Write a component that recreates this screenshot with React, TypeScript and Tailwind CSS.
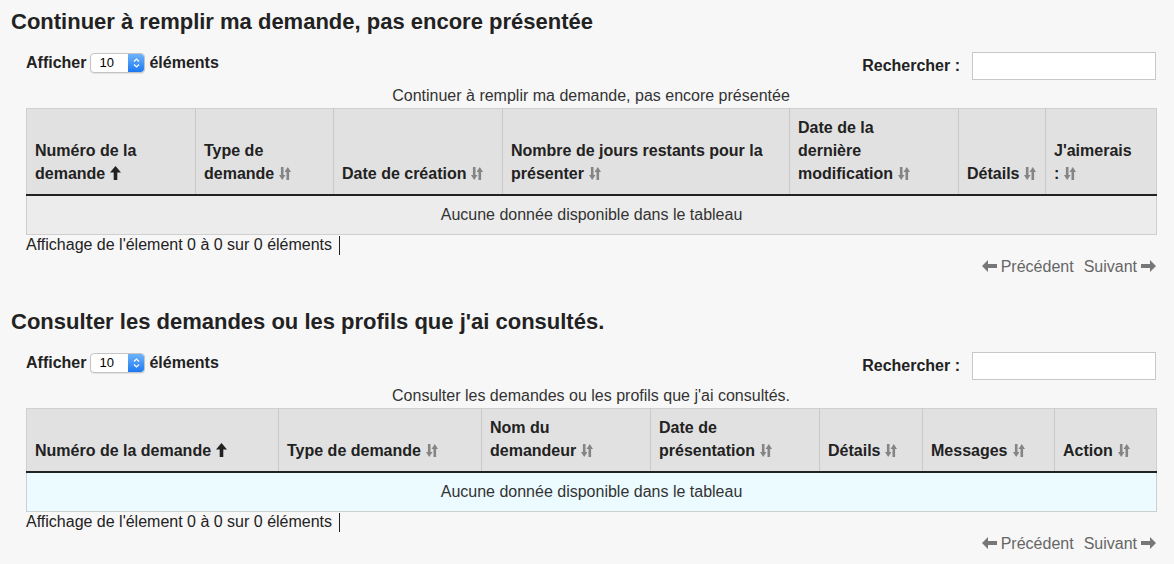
import React from "react";

const SortIcon = () => (
  <svg width="12" height="15" viewBox="0 0 12 15" className="inline-block ml-[5px] -mt-[3px] align-middle">
    <path d="M1.9 1h2.6v8h2L3.2 14 0 9h1.9z" fill="#858585" />
    <path d="M7.5 14h2.6V6H12L8.8 1 5.5 6h2z" fill="#858585" />
  </svg>
);

const UpIcon = () => (
  <svg width="11" height="14" viewBox="0 0 11 14" className="inline-block ml-[5px] -mt-[4px] align-middle">
    <path d="M5.5 0 11 6.5H7.3V14H3.7V6.5H0z" fill="#222" />
  </svg>
);

const ArrowLeft = () => (
  <svg width="15" height="12" viewBox="0 0 15 12" className="inline-block mr-[4px] -mt-[3px] align-middle">
    <path d="M0 6 6 0v4h9v4H6v4z" fill="#777" />
  </svg>
);

const ArrowRight = () => (
  <svg width="15" height="12" viewBox="0 0 15 12" className="inline-block ml-[4px] -mt-[3px] align-middle">
    <path d="M15 6 9 0v4H0v4h9v4z" fill="#777" />
  </svg>
);

const FakeSelect = () => (
  <div className="mx-[4px] flex h-[20px] w-[55px] items-stretch overflow-hidden rounded-[4px] border border-[#c4c4c4] bg-white shadow-[0_1px_1px_rgba(0,0,0,0.08)]">
    <span className="flex-1 pl-[8px] text-[13px] font-normal leading-[18px] text-black">10</span>
    <span className="flex w-[16px] items-center justify-center rounded-r-[3px] bg-gradient-to-b from-[#6cb3fa] to-[#1a78f2]">
      <svg width="7" height="12" viewBox="0 0 7 12">
        <path d="M1 4.5 3.5 2 6 4.5M1 7.5 3.5 10 6 7.5" stroke="white" strokeWidth="1.2" fill="none" />
      </svg>
    </span>
  </div>
);

type Col = { lines: string[]; w: string; up?: boolean };

const DataSection = ({ title, cols, emptyBg }: { title: string; cols: Col[]; emptyBg: string }) => (
  <section className="pl-[11px] pr-[18px]">
    <h2 className="text-[22px] font-bold leading-[24px] text-[#222]">{title}</h2>
    <div className="pl-[15px]">
      <div className="mt-[18px] flex items-start justify-between">
        <div className="flex h-[22px] items-center text-[16px] font-bold text-[#222]">
          Afficher
          <FakeSelect />
          éléments
        </div>
        <div className="flex items-center text-[16px] font-bold text-[#222]">
          Rechercher :
          <input className="ml-[12px] h-[28px] w-[184px] border border-[#c8c8c8] bg-white outline-none" />
        </div>
      </div>
      <div className="mt-[6px] mb-[2px] text-center text-[16px] leading-[20px] text-[#333]">{title}</div>
      <table className="w-full table-fixed border-collapse border border-[#cfcfcf] text-[16px] text-[#333]">
        <thead>
          <tr className="bg-[#e1e1e1]">
            {cols.map((c, i) => (
              <th
                key={i}
                className={`${c.w} whitespace-nowrap border-b-2 border-b-[#222] border-l border-l-[#c9c9c9] px-[8px] pt-[7px] pb-[9px] text-left align-bottom font-bold leading-[23px] text-[#222] first:border-l-0`}
              >
                {c.lines.map((l, j) => (
                  <React.Fragment key={j}>
                    {j > 0 && <br />}
                    {l}
                  </React.Fragment>
                ))}
                {c.up ? <UpIcon /> : <SortIcon />}
              </th>
            ))}
          </tr>
        </thead>
        <tbody>
          <tr className={emptyBg}>
            <td colSpan={cols.length} className="py-[8px] text-center leading-[22px]">
              Aucune donnée disponible dans le tableau
            </td>
          </tr>
        </tbody>
      </table>
      <div className="flex items-center text-[16px] leading-[20px] text-[#222]">
        Affichage de l'élement 0 à 0 sur 0 éléments
        <span className="ml-[7px] inline-block h-[19px] w-px bg-[#222]" />
      </div>
      <div className="mt-[2px] flex justify-end gap-[10px] text-[16px] leading-[20px] text-[#666]">
        <span>
          <ArrowLeft />
          Précédent
        </span>
        <span>
          Suivant
          <ArrowRight />
        </span>
      </div>
    </div>
  </section>
);

const first: Col[] = [
  { lines: ["Numéro de la", "demande"], w: "w-[169px]", up: true },
  { lines: ["Type de", "demande"], w: "w-[138px]" },
  { lines: ["Date de création"], w: "w-[169px]" },
  { lines: ["Nombre de jours restants pour la", "présenter"], w: "w-[287px]" },
  { lines: ["Date de la", "dernière", "modification"], w: "w-[169px]" },
  { lines: ["Détails"], w: "w-[87px]" },
  { lines: ["J'aimerais", ":"], w: "w-[111px]" },
];

const second: Col[] = [
  { lines: ["Numéro de la demande"], w: "w-[252px]", up: true },
  { lines: ["Type de demande"], w: "w-[203px]" },
  { lines: ["Nom du", "demandeur"], w: "w-[169px]" },
  { lines: ["Date de", "présentation"], w: "w-[169px]" },
  { lines: ["Détails"], w: "w-[103px]" },
  { lines: ["Messages"], w: "w-[132px]" },
  { lines: ["Action"], w: "w-[102px]" },
];

export default function App() {
  return (
    <div className="min-h-[564px] w-full bg-[#f7f7f7] pt-[10px] font-['Liberation_Sans',Arial,sans-serif]">
      <DataSection title="Continuer à remplir ma demande, pas encore présentée" cols={first} emptyBg="bg-[#ececec]" />
      <div className="h-[33px]" />
      <DataSection title="Consulter les demandes ou les profils que j'ai consultés." cols={second} emptyBg="bg-[#ebfbff]" />
    </div>
  );
}
